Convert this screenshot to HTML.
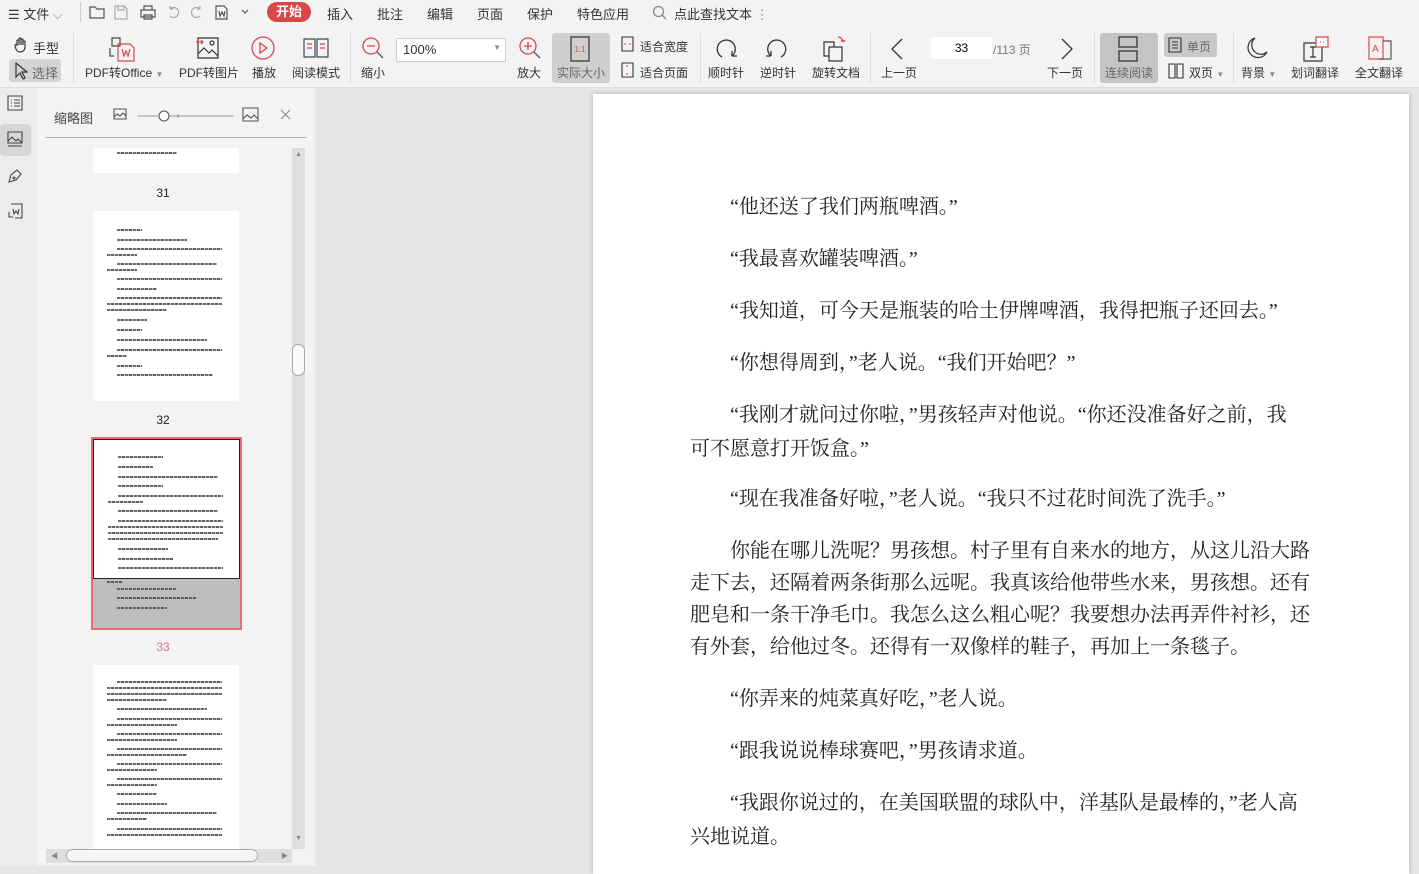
<!DOCTYPE html>
<html><head><meta charset="utf-8"><style>
*{margin:0;padding:0;box-sizing:border-box}
body{width:1419px;height:866px;overflow:hidden;background:#e6e6e6;font-family:"Liberation Sans","Noto Sans CJK SC",sans-serif;color:#333;position:relative}
.a{position:absolute}
.tb{left:0;top:0;width:1419px;height:88px;background:#f3f3f3;border-bottom:1px solid #ddd}
.t{font-size:12px;color:#333;white-space:nowrap}
.lbl{font-size:12px;color:#333;white-space:nowrap;position:absolute;top:64px}
.sep{position:absolute;top:33px;width:1px;height:50px;background:#ddd}
svg{position:absolute}
.pg{font-family:"Noto Serif CJK SC","Liberation Serif",serif;font-size:20px;line-height:32px;color:#222;position:absolute;left:690px;width:622px;text-indent:40px;letter-spacing:0;font-feature-settings:"chws" 0,"halt" 0}
.q{font-family:"Liberation Serif",serif}
.th{position:absolute;background:#fff;overflow:hidden}
.ln{position:absolute;height:2px;background:repeating-linear-gradient(90deg,#555 0 3px,#aaa 3px 4px,#444 4px 7px,#bbb 7px 8px);opacity:.85}
.num{position:absolute;font-size:12px;width:60px;text-align:center;left:133px}
</style></head><body>
<div class="a tb"></div>
<div class="a t" style="left:8px;top:4px;font-size:13px">☰ 文件 <span style="color:#888">⌵</span></div>
<div class="a" style="left:80px;top:2px;width:1px;height:20px;background:#ccc"></div>
<svg style="left:88px;top:4px" width="170" height="16" fill="none" stroke="#555" stroke-width="1.2">
<path d="M2 3h5l2 2h7v9H2z"/><path d="M27 2h9l3 3v10H27z M30 2v4h6V2" stroke="#aaa"/><path d="M53 6h14v7H53z M56 6V2h8v4 M56 11h8v4h-8z"/><path d="M82 5a5 5 0 1 1 0 7 M82 5v-3 M82 5h3" stroke="#aaa"/><path d="M112 5a5 5 0 1 0 0 7 M112 5v-3 M112 5h-3" stroke="#aaa"/><path d="M128 2h8l3 3v10h-11z M131 7l1 5 2-4 2 4 1-5"/><path d="M154 6l3 3 3-3"/></svg>
<div class="a" style="left:267px;top:2px;width:44px;height:20px;border-radius:10px;background:#d9474b;color:#fff;font-size:13px;font-weight:bold;text-align:center;line-height:20px">开始</div>
<div class="a t" style="left:327px;top:4px;font-size:13px">插入</div>
<div class="a t" style="left:377px;top:4px;font-size:13px">批注</div>
<div class="a t" style="left:427px;top:4px;font-size:13px">编辑</div>
<div class="a t" style="left:477px;top:4px;font-size:13px">页面</div>
<div class="a t" style="left:527px;top:4px;font-size:13px">保护</div>
<div class="a t" style="left:577px;top:4px;font-size:13px">特色应用</div>
<svg style="left:652px;top:5px" width="16" height="16" fill="none" stroke="#888" stroke-width="1.3"><circle cx="6.5" cy="6.5" r="5"/><path d="M10 10l4 4"/></svg>
<div class="a t" style="left:674px;top:4px;font-size:13px">点此查找文本 <span style="color:#888">⋮</span></div>
<svg style="left:13px;top:37px" width="16" height="16" fill="none" stroke="#333" stroke-width="1.2"><path d="M4 9V4a1 1 0 0 1 2 0v4V2a1 1 0 0 1 2 0v6V3a1 1 0 0 1 2 0v5V5a1 1 0 0 1 2 0v5c0 3-2 5-5 5-2 0-3-1-4-3L2 9a1 1 0 0 1 2-1z"/></svg>
<div class="a t" style="left:33px;top:38px;font-size:13px">手型</div>
<div class="a" style="left:9px;top:59px;width:52px;height:23px;background:#d4d4d4;border-radius:3px"></div>
<svg style="left:14px;top:62px" width="14" height="18" fill="none" stroke="#333" stroke-width="1.2"><path d="M2 1v14l4-4 3 6 2-1-3-6h5z"/></svg>
<div class="a t" style="left:32px;top:63px;font-size:13px;color:#666">选择</div>
<div class="sep" style="left:73px"></div>
<svg style="left:108px;top:35px" width="30" height="28" fill="none" stroke="#444" stroke-width="1.2"><path d="M4 3h8v8H4z M2 13v8h4"/><path d="M10 9h12l4 4v13H10z" stroke="#d9474b"/><path d="M14 14l2 7 2-5 2 5 2-7" stroke="#d9474b"/></svg>
<div class="lbl" style="left:85px">PDF转Office <span style="font-size:8px;color:#888">▼</span></div>
<svg style="left:196px;top:36px" width="24" height="24" fill="none" stroke="#333" stroke-width="1.2"><path d="M2 2h20v20H2z"/><path d="M2 18l6-6 5 5 3-3 6 6"/><circle cx="16" cy="7" r="2"/><path d="M0 6h7M5 4l2 2-2 2" stroke="#d9474b"/></svg>
<div class="lbl" style="left:179px">PDF转图片</div>
<svg style="left:251px;top:36px" width="24" height="24" fill="none" stroke="#d9474b" stroke-width="1.3"><circle cx="12" cy="12" r="11"/><path d="M9 7l7 5-7 5z"/></svg>
<div class="lbl" style="left:252px">播放</div>
<svg style="left:303px;top:37px" width="26" height="22" fill="none" stroke="#445" stroke-width="1.2"><path d="M1 2h11v18H1z M14 2h11v18H14z"/><path d="M4 7h5M4 11h5M17 7h5M17 11h5" stroke="#d9474b"/></svg>
<div class="lbl" style="left:292px">阅读模式</div>
<div class="sep" style="left:350px"></div>
<svg style="left:361px;top:36px" width="24" height="24" fill="none" stroke="#d9474b" stroke-width="1.3"><circle cx="10" cy="10" r="8"/><path d="M6 10h8"/><path d="M16 16l6 6" stroke="#555"/></svg>
<div class="lbl" style="left:361px">缩小</div>
<div class="a" style="left:396px;top:38px;width:110px;height:24px;background:#fff;border:1px solid #ccc;border-radius:2px;font-size:13px;padding:3px 6px">100%<span style="position:absolute;right:4px;top:4px;font-size:8px;color:#888">▼</span></div>
<svg style="left:518px;top:36px" width="24" height="24" fill="none" stroke="#d9474b" stroke-width="1.3"><circle cx="10" cy="10" r="8"/><path d="M6 10h8M10 6v8"/><path d="M16 16l6 6" stroke="#555"/></svg>
<div class="lbl" style="left:517px">放大</div>
<div class="a" style="left:552px;top:33px;width:58px;height:50px;background:#cfcfcf;border-radius:3px"></div>
<svg style="left:570px;top:36px" width="20" height="26" fill="none" stroke="#333" stroke-width="1.2"><path d="M1 1h18v24H1z"/><text x="10" y="16" font-size="8" fill="#d9474b" stroke="none" text-anchor="middle" font-family="Liberation Sans">1:1</text></svg>
<div class="lbl" style="left:557px;color:#666">实际大小</div>
<svg style="left:620px;top:36px" width="16" height="46" fill="none" stroke="#333" stroke-width="1.1"><path d="M2 1h11v14H2z"/><path d="M4 8h2M9 8h2" stroke="#d9474b"/><path d="M2 27h11v14H2z"/><path d="M7 29v2M7 37v2" stroke="#d9474b"/></svg>
<div class="a t" style="left:640px;top:38px">适合宽度</div>
<div class="a t" style="left:640px;top:64px">适合页面</div>
<div class="sep" style="left:700px"></div>
<svg style="left:713px;top:36px" width="26" height="26" fill="none" stroke="#333" stroke-width="1.3"><path d="M19 20A9 9 0 1 0 9 21 M19 20v-5 M19 20h5"/></svg>
<div class="lbl" style="left:708px">顺时针</div>
<svg style="left:764px;top:36px" width="26" height="26" fill="none" stroke="#333" stroke-width="1.3"><path d="M7 20A9 9 0 1 1 17 21 M7 20v-5 M7 20H2"/></svg>
<div class="lbl" style="left:760px">逆时针</div>
<svg style="left:822px;top:34px" width="28" height="28" fill="none" stroke="#333" stroke-width="1.2"><path d="M2 8h10v14H2z"/><path d="M7 13h13v14H7z" fill="#f3f3f3"/><path d="M16 3a5 5 0 0 1 5 5M21 8l-2-2M21 8l2-2" stroke="#d9474b"/></svg>
<div class="lbl" style="left:812px">旋转文档</div>
<div class="sep" style="left:870px"></div>
<svg style="left:890px;top:38px" width="14" height="22" fill="none" stroke="#333" stroke-width="1.3"><path d="M12 1L2 11l10 10"/></svg>
<div class="lbl" style="left:881px">上一页</div>
<div class="a" style="left:931px;top:37px;width:61px;height:22px;background:#fff;font-size:12px;text-align:center;line-height:22px;color:#000">33</div>
<div class="a t" style="left:993px;top:41px;color:#777">/113 页</div>
<svg style="left:1060px;top:38px" width="14" height="22" fill="none" stroke="#333" stroke-width="1.3"><path d="M2 1l10 10L2 21"/></svg>
<div class="lbl" style="left:1047px">下一页</div>
<div class="sep" style="left:1094px"></div>
<div class="a" style="left:1100px;top:33px;width:58px;height:50px;background:#c4c4c4;border-radius:3px"></div>
<svg style="left:1117px;top:36px" width="22" height="26" fill="none" stroke="#333" stroke-width="1.3"><path d="M2 1h18v10H2zM2 15h18v10H2z"/></svg>
<div class="lbl" style="left:1105px;color:#666">连续阅读</div>
<div class="a" style="left:1164px;top:33px;width:53px;height:24px;background:#c9c9c9;border-radius:3px"></div>
<svg style="left:1168px;top:37px" width="14" height="16" fill="none" stroke="#333" stroke-width="1.1"><path d="M1 1h12v14H1zM4 5h6M4 8h6M4 11h6"/></svg>
<div class="a t" style="left:1187px;top:38px;color:#666">单页</div>
<svg style="left:1168px;top:63px" width="16" height="16" fill="none" stroke="#333" stroke-width="1.1"><path d="M1 1h6v14H1zM9 1h6v14H9z"/></svg>
<div class="a t" style="left:1189px;top:64px">双页 <span style="font-size:8px;color:#888">▼</span></div>
<div class="sep" style="left:1233px"></div>
<svg style="left:1245px;top:36px" width="24" height="24" fill="none" stroke="#333" stroke-width="1.2"><path d="M10 2A10 10 0 1 0 22 16 8 8 0 0 1 10 2z"/></svg>
<div class="lbl" style="left:1241px">背景 <span style="font-size:8px;color:#888">▼</span></div>
<svg style="left:1302px;top:35px" width="28" height="28" fill="none" stroke="#333" stroke-width="1.2"><path d="M2 8h18v18H2z"/><path d="M8 12h6M11 12v10M8 22h6"/><path d="M14 2h12v10H14z" fill="#fff" stroke="#d9474b"/><path d="M18 7h1M21 7h1" stroke="#d9474b"/></svg>
<div class="lbl" style="left:1291px">划词翻译</div>
<svg style="left:1367px;top:35px" width="26" height="28" fill="none" stroke="#d9474b" stroke-width="1.2"><path d="M2 2h14v22H2z"/><path d="M16 6h8v18H12" stroke="#555"/><text x="5" y="17" font-size="10" fill="#d9474b" stroke="none" font-family="Liberation Sans">A</text></svg>
<div class="lbl" style="left:1355px">全文翻译</div>

<div class="a" style="left:0;top:88px;width:37px;height:778px;background:#ececec"></div>
<svg style="left:7px;top:95px" width="16" height="16" fill="none" stroke="#444" stroke-width="1.1"><path d="M1 1h14v14H1zM4 5h1M7 5h6M4 8h1M7 8h6M4 11h1M7 11h6"/></svg>
<div class="a" style="left:0;top:124px;width:31px;height:32px;background:#d6d6d6;border-radius:4px"></div>
<svg style="left:7px;top:131px" width="16" height="18" fill="none" stroke="#444" stroke-width="1.1"><path d="M1 1h14v11H1zM1 10l4-4 4 4 2-2 4 4M1 15h14"/></svg>
<svg style="left:7px;top:168px" width="16" height="16" fill="none" stroke="#444" stroke-width="1.1"><path d="M2 14l2-7 6-5 4 4-5 6zM7 9a1 1 0 1 0 .1 0"/></svg>
<svg style="left:7px;top:203px" width="16" height="16" fill="none" stroke="#444" stroke-width="1.1"><path d="M4 1h11v14H8M2 9v5h4M6 6l1 5 2-3 2 3 1-5"/></svg>
<div class="a" style="left:37px;top:88px;width:278px;height:778px;background:#f3f3f3"></div>
<div class="a" style="left:54px;top:108px;font-size:13px;color:#444">缩略图</div>
<svg style="left:113px;top:107px" width="180" height="16" fill="none" stroke="#555" stroke-width="1.1"><path d="M1 2h12v10H1zM1 10l3-3 3 2 3-3 3 3"/><path d="M25 9h20M56 9h65M65 7v4" stroke="#999"/><circle cx="51" cy="9" r="5" fill="#fff" stroke="#555"/><path d="M130 1h15v13H130zM130 12l4-4 4 3 3-3 4 4"/><path d="M168 3l9 9M177 3l-9 9" stroke="#888"/></svg>
<div class="a" style="left:46px;top:137px;width:260px;height:1px;background:#aaa"></div>
<div class="a" style="left:292px;top:148px;width:13px;height:701px;background:#dedede"></div>
<div class="a" style="left:295px;top:151px;font-size:7px;color:#888">▲</div>
<div class="a" style="left:295px;top:835px;font-size:7px;color:#888">▼</div>
<div class="a" style="left:292px;top:344px;width:13px;height:32px;background:#fafafa;border:1px solid #aaa;border-radius:6px"></div>
<div class="a" style="left:46px;top:849px;width:246px;height:14px;background:#dedede"></div>
<div class="a" style="left:66px;top:849px;width:192px;height:13px;background:#f5f5f5;border:1px solid #aaa;border-radius:7px"></div>
<div class="a" style="left:51px;top:851px;font-size:7px;color:#888">◀</div>
<div class="a" style="left:281px;top:851px;font-size:7px;color:#888">▶</div>
<div class="th" style="left:93px;top:148px;width:146px;height:25px"><div class="ln" style="left:24px;top:4px;width:60px"></div></div>
<div class="num" style="top:186px;color:#222">31</div>
<div class="th" style="left:93px;top:211px;width:146px;height:190px">
<div class="ln" style="left:24px;top:18px;width:25px"></div><div class="ln" style="left:24px;top:28px;width:70px"></div><div class="ln" style="left:24px;top:37px;width:105px"></div><div class="ln" style="left:14px;top:43px;width:30px"></div><div class="ln" style="left:24px;top:52px;width:100px"></div><div class="ln" style="left:14px;top:58px;width:30px"></div><div class="ln" style="left:24px;top:67px;width:105px"></div><div class="ln" style="left:24px;top:77px;width:40px"></div><div class="ln" style="left:24px;top:86px;width:105px"></div><div class="ln" style="left:14px;top:92px;width:115px"></div><div class="ln" style="left:14px;top:98px;width:60px"></div><div class="ln" style="left:24px;top:108px;width:30px"></div><div class="ln" style="left:24px;top:118px;width:25px"></div><div class="ln" style="left:24px;top:128px;width:90px"></div><div class="ln" style="left:24px;top:138px;width:105px"></div><div class="ln" style="left:14px;top:144px;width:20px"></div><div class="ln" style="left:24px;top:154px;width:25px"></div><div class="ln" style="left:24px;top:163px;width:96px"></div></div>
<div class="num" style="top:413px;color:#222">32</div>
<div class="a" style="left:91px;top:437px;width:151px;height:193px;border:2px solid #e86c6c;background:#bfbcbd"></div>
<div class="th" style="left:93px;top:439px;width:147px;height:140px;border:1px solid #222">
<div class="ln" style="left:24px;top:16px;width:45px"></div><div class="ln" style="left:24px;top:26px;width:35px"></div><div class="ln" style="left:24px;top:36px;width:100px"></div><div class="ln" style="left:24px;top:45px;width:45px"></div><div class="ln" style="left:24px;top:55px;width:105px"></div><div class="ln" style="left:14px;top:61px;width:35px"></div><div class="ln" style="left:24px;top:70px;width:100px"></div><div class="ln" style="left:24px;top:80px;width:105px"></div><div class="ln" style="left:14px;top:86px;width:115px"></div><div class="ln" style="left:14px;top:92px;width:115px"></div><div class="ln" style="left:14px;top:98px;width:110px"></div><div class="ln" style="left:24px;top:108px;width:50px"></div><div class="ln" style="left:24px;top:118px;width:55px"></div><div class="ln" style="left:24px;top:127px;width:105px"></div></div>
<div class="ln" style="left:107px;top:581px;width:15px"></div><div class="ln" style="left:117px;top:588px;width:60px"></div><div class="ln" style="left:117px;top:597px;width:80px"></div><div class="ln" style="left:117px;top:607px;width:50px"></div>
<div class="num" style="top:640px;color:#e86ca0">33</div>
<div class="th" style="left:93px;top:665px;width:146px;height:184px">
<div class="ln" style="left:24px;top:16px;width:105px"></div><div class="ln" style="left:14px;top:22px;width:115px"></div><div class="ln" style="left:14px;top:28px;width:115px"></div><div class="ln" style="left:14px;top:34px;width:60px"></div><div class="ln" style="left:24px;top:43px;width:90px"></div><div class="ln" style="left:24px;top:53px;width:105px"></div><div class="ln" style="left:14px;top:59px;width:70px"></div><div class="ln" style="left:24px;top:68px;width:105px"></div><div class="ln" style="left:14px;top:74px;width:70px"></div><div class="ln" style="left:24px;top:83px;width:105px"></div><div class="ln" style="left:14px;top:89px;width:80px"></div><div class="ln" style="left:24px;top:98px;width:105px"></div><div class="ln" style="left:14px;top:104px;width:50px"></div><div class="ln" style="left:24px;top:113px;width:105px"></div><div class="ln" style="left:14px;top:119px;width:50px"></div><div class="ln" style="left:24px;top:128px;width:40px"></div><div class="ln" style="left:24px;top:138px;width:50px"></div><div class="ln" style="left:24px;top:147px;width:100px"></div><div class="ln" style="left:14px;top:153px;width:40px"></div><div class="ln" style="left:24px;top:163px;width:105px"></div><div class="ln" style="left:14px;top:169px;width:115px"></div></div>
<div class="a" style="left:593px;top:94px;width:816px;height:780px;background:#fff;box-shadow:0 0 5px rgba(0,0,0,.25)"></div>
<div class="pg" style="top:189px"><span class="q">“</span>他还送了我们两瓶啤酒。<span class="q">”</span></div>
<div class="pg" style="top:241px"><span class="q">“</span>我最喜欢罐装啤酒。<span class="q">”</span></div>
<div class="pg" style="top:293px"><span class="q">“</span>我知道，可今天是瓶装的哈土伊牌啤酒，我得把瓶子还回去。<span class="q">”</span></div>
<div class="pg" style="top:345px"><span class="q">“</span>你想得周到，<span class="q">”</span>老人说。<span class="q">“</span>我们开始吧？<span class="q">”</span></div>
<div class="pg" style="top:397px"><span class="q">“</span>我刚才就问过你啦，<span class="q">”</span>男孩轻声对他说。<span class="q">“</span>你还没准备好之前，我<br>可不愿意打开饭盒。<span class="q">”</span></div>
<div class="pg" style="top:481px"><span class="q">“</span>现在我准备好啦，<span class="q">”</span>老人说。<span class="q">“</span>我只不过花时间洗了洗手。<span class="q">”</span></div>
<div class="pg" style="top:533px">你能在哪儿洗呢？男孩想。村子里有自来水的地方，从这儿沿大路走下去，还隔着两条街那么远呢。我真该给他带些水来，男孩想。还有肥皂和一条干净毛巾。我怎么这么粗心呢？我要想办法再弄件衬衫，还有外套，给他过冬。还得有一双像样的鞋子，再加上一条毯子。</div>
<div class="pg" style="top:681px"><span class="q">“</span>你弄来的炖菜真好吃，<span class="q">”</span>老人说。</div>
<div class="pg" style="top:733px"><span class="q">“</span>跟我说说棒球赛吧，<span class="q">”</span>男孩请求道。</div>
<div class="pg" style="top:785px"><span class="q">“</span>我跟你说过的，在美国联盟的球队中，洋基队是最棒的，<span class="q">”</span>老人高<br>兴地说道。</div>
</body></html>
